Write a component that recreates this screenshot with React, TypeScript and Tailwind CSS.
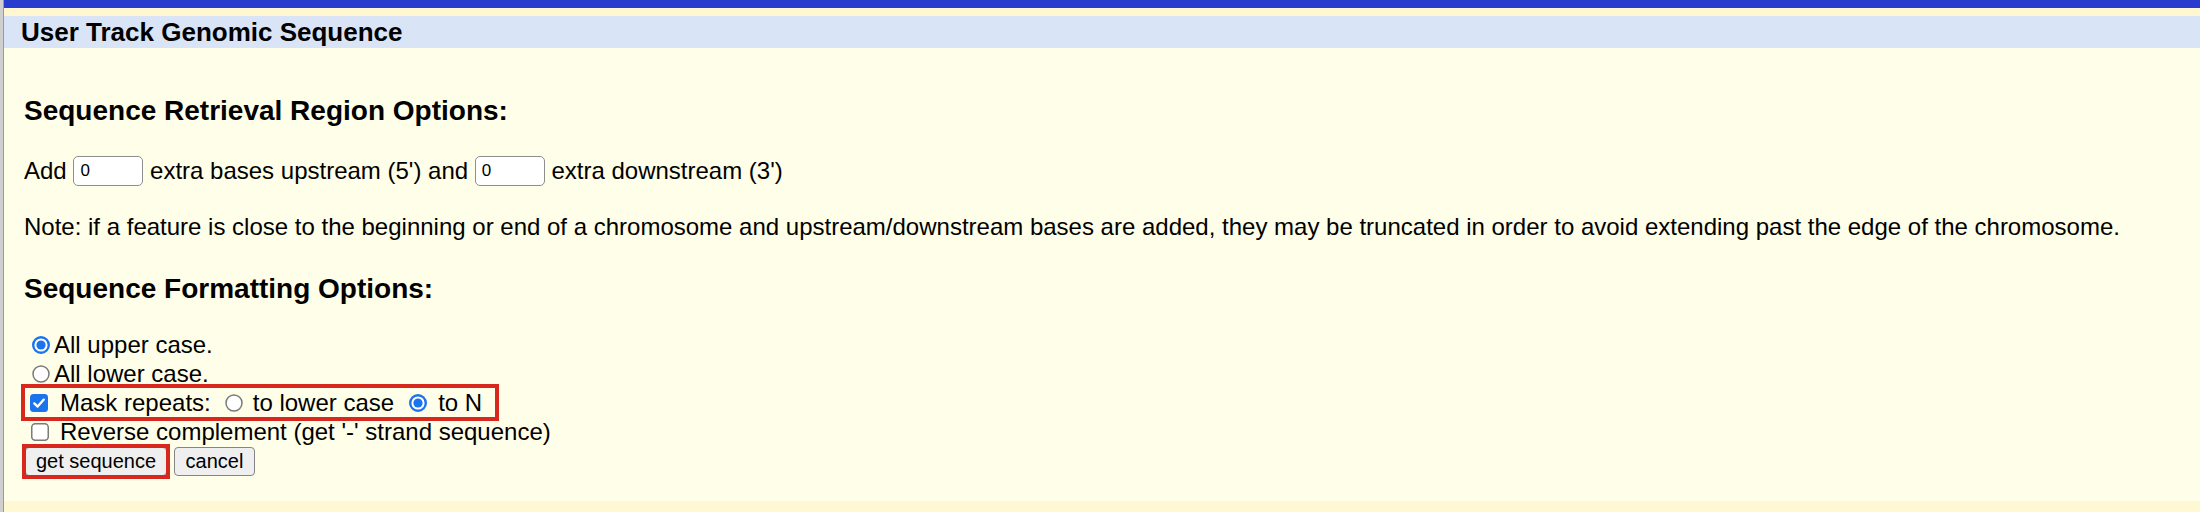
import React from "react";

function RadioOn() {
  return (
    <svg width="18" height="18" viewBox="0 0 18 18" className="shrink-0">
      <circle cx="9" cy="9" r="7.8" fill="white" stroke="#1b74ee" strokeWidth="2.4" />
      <circle cx="9" cy="9" r="4.6" fill="#1b74ee" />
    </svg>
  );
}

function RadioOff() {
  return (
    <svg width="18" height="18" viewBox="0 0 18 18" className="shrink-0">
      <circle cx="9" cy="9" r="8" fill="white" stroke="#7a7a7a" strokeWidth="1.5" />
    </svg>
  );
}

function CheckOn() {
  return (
    <svg width="18" height="18" viewBox="0 0 18 18" className="shrink-0">
      <rect x="0" y="0" width="18" height="18" rx="3.5" fill="#1b74ee" />
      <path d="M4.3 9.4 L7.6 12.6 L13.8 5.6" fill="none" stroke="white" strokeWidth="2.3" strokeLinecap="round" strokeLinejoin="round" />
    </svg>
  );
}

function CheckOff() {
  return (
    <svg width="18" height="18" viewBox="0 0 18 18" className="shrink-0">
      <rect x="0.75" y="0.75" width="16.5" height="16.5" rx="3.5" fill="white" stroke="#7a7a7a" strokeWidth="1.5" />
    </svg>
  );
}

export default function App() {
  return (
    <div className="flex h-[512px] w-[2200px] bg-[#fffee8] font-['Liberation_Sans',Arial,sans-serif] text-black">
      <div className="w-[3px] bg-[#cfcfcf]" />
      <div className="w-[1px] bg-[#9a9a9a]" />
      <div className="flex flex-1 flex-col">
        <div className="h-[8px] bg-[#293ccd]" />
        <div className="h-[8px] bg-[#fff7d1]" />
        <div className="flex h-[32px] items-center bg-[#d9e4f6] pl-[17px] text-[26px] font-bold leading-none">
          User Track Genomic Sequence
        </div>
        <div className="flex flex-1 flex-col pl-[20px] text-[24px]">
          <div className="mt-[47px] h-[32px] text-[28px] font-bold leading-[32px]">
            Sequence Retrieval Region Options:
          </div>
          <div className="mt-[29px] flex h-[30px] items-center whitespace-pre leading-none">
            <span>Add </span>
            <input
              readOnly
              value="0"
              className="h-[30px] w-[70px] rounded-[5px] border-[1.5px] border-[#8e8e8e] bg-white px-[6px] text-[17px] outline-none"
            />
            <span> extra bases upstream (5') and </span>
            <input
              readOnly
              value="0"
              className="h-[30px] w-[70px] rounded-[5px] border-[1.5px] border-[#8e8e8e] bg-white px-[6px] text-[17px] outline-none"
            />
            <span> extra downstream (3')</span>
          </div>
          <div className="mt-[26px] h-[29px] leading-[29px]">
            Note: if a feature is close to the beginning or end of a chromosome and upstream/downstream bases are added, they may be truncated in order to avoid extending past the edge of the chromosome.
          </div>
          <div className="mt-[32px] h-[32px] text-[28px] font-bold leading-[32px]">
            Sequence Formatting Options:
          </div>
          <div className="mt-[25px] flex flex-col leading-none">
            <div className="flex h-[29px] items-center">
              <span className="ml-[8px]"><RadioOn /></span>
              <span className="ml-[4px]">All upper case.</span>
            </div>
            <div className="flex h-[29px] items-center">
              <span className="ml-[8px]"><RadioOff /></span>
              <span className="ml-[4px]">All lower case.</span>
            </div>
            <div className="ml-[1px] flex h-[29px] w-fit items-center pr-[13px] outline-4 outline-[#d8281d]">
              <span className="ml-[5px]"><CheckOn /></span>
              <span className="ml-[12px]">Mask repeats:</span>
              <span className="ml-[14px]"><RadioOff /></span>
              <span className="ml-[10px]">to lower case</span>
              <span className="ml-[15px]"><RadioOn /></span>
              <span className="ml-[11px]">to N</span>
            </div>
            <div className="flex h-[29px] items-center">
              <span className="ml-[7px]"><CheckOff /></span>
              <span className="ml-[11px]">Reverse complement (get '-' strand sequence)</span>
            </div>
            <div className="flex h-[30px] items-center">
              <span className="ml-[1px] flex outline-4 -outline-offset-1 outline-[#d8281d]">
                <button className="h-[29px] w-[142px] rounded-[4px] border-[1.5px] border-[#858585] bg-[#efefef] text-[20px] leading-none">
                  get sequence
                </button>
              </span>
              <button className="ml-[7px] h-[29px] w-[81px] rounded-[4px] border-[1.5px] border-[#858585] bg-[#efefef] text-[20px] leading-none">
                cancel
              </button>
            </div>
          </div>
        </div>
        <div className="h-[11px] bg-[#fff8d2]" />
      </div>
    </div>
  );
}
